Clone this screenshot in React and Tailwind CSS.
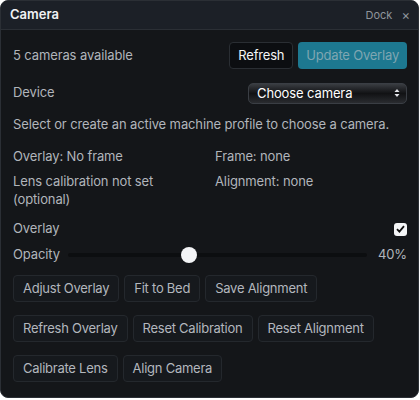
import { useState } from 'react'

const font = { fontFamily: 'Inter, "Noto Sans", sans-serif' }

function Btn({ children }) {
  return (
    <button className="h-[27px] px-[9px] rounded-[4px] border border-[#24282d] bg-[#16191d] text-[13px] text-[#b3b7bd] leading-none tracking-[-0.25px]">
      {children}
    </button>
  )
}

export default function App() {
  const [overlay, setOverlay] = useState(true)

  return (
    <div className="w-[420px] h-[400px] bg-white" style={font}>
      <div className="w-[419px] h-[398px] rounded-[8px] border border-[#2b2f35] bg-[#141619] overflow-hidden flex flex-col">

        {/* header */}
        <div className="h-[29px] shrink-0 bg-[#1c2027] border-b border-[#2b2f35] flex items-center justify-between pl-[9px] pr-[8px]">
          <span className="text-[13px] font-semibold text-[#f1f2f4]">Camera</span>
          <div className="flex items-center gap-[9px] text-[#8f949b]">
            <span className="text-[11px]">Dock</span>
            <span className="text-[13px] leading-none">×</span>
          </div>
        </div>

        <div className="flex flex-col pl-[12px] pr-[11px] text-[13px] text-[#b1b5bb] tracking-[-0.12px]">

          {/* cameras */}
          <div className="flex items-center justify-between mt-[12px] h-[27px]">
            <span>5 cameras available</span>
            <div className="flex gap-[5px]">
              <button className="h-[27px] px-[8px] rounded-[4px] border border-[#2a2e33] bg-[#0c0e11] text-[#f4f5f6] tracking-[-0.2px]">Refresh</button>
              <button className="h-[27px] px-[8px] rounded-[4px] bg-[#1d7890] text-[#7fa6b2] tracking-[-0.2px]">Update Overlay</button>
            </div>
          </div>

          {/* device */}
          <div className="flex items-center justify-between mt-[13px] h-[22px]">
            <span>Device</span>
            <div className="w-[159px] h-[21px] rounded-[5px] border border-[#3a3e44] bg-gradient-to-b from-[#3a3d42] via-[#111214] to-[#2a2c30] flex items-center justify-between pl-[8px] pr-[6px]">
              <span className="text-[13px] text-white leading-none">Choose camera</span>
              <svg width="6" height="10" viewBox="0 0 6 10">
                <path d="M3 1 L5.5 4 H0.5 Z" fill="#e5e7eb" />
                <path d="M3 9 L5.5 6 H0.5 Z" fill="#e5e7eb" />
              </svg>
            </div>
          </div>

          <p className="mt-[12px] leading-[17px]">Select or create an active machine profile to choose a camera.</p>

          {/* status grid */}
          <div className="grid grid-cols-[202px_1fr] mt-[14px] gap-y-[7px] leading-[18px]">
            <span>Overlay: No frame</span>
            <span>Frame: none</span>
            <span>Lens calibration not set<br />(optional)</span>
            <span>Alignment: none</span>
          </div>

          {/* overlay toggle */}
          <div className="flex items-center justify-between mt-[11px] h-[20px]">
            <span>Overlay</span>
            <button
              onClick={() => setOverlay(!overlay)}
              className="w-[13px] h-[13px] rounded-[3px] bg-[#f4f5f7] flex items-center justify-center"
            >
              {overlay && (
                <svg width="9" height="8" viewBox="0 0 9 8">
                  <path d="M1 4.2 L3.4 6.6 L8 1.2" stroke="#111" strokeWidth="1.8" fill="none" />
                </svg>
              )}
            </button>
          </div>

          {/* opacity */}
          <div className="flex items-center mt-[6px] h-[20px]">
            <span className="w-[55px]">Opacity</span>
            <div className="relative w-[299px] h-[4px] rounded-full bg-[#0c0e10]">
              <div className="absolute top-1/2 left-[113px] w-[16px] h-[16px] -translate-y-1/2 rounded-full bg-[#f3f4f6]" />
            </div>
            <span className="ml-auto">40%</span>
          </div>

          {/* actions */}
          <div className="flex flex-col gap-[13px] mt-[10px]">
            <div className="flex gap-[5px]">
              <Btn>Adjust Overlay</Btn>
              <Btn>Fit to Bed</Btn>
              <Btn>Save Alignment</Btn>
            </div>
            <div className="flex gap-[5px]">
              <Btn>Refresh Overlay</Btn>
              <Btn>Reset Calibration</Btn>
              <Btn>Reset Alignment</Btn>
            </div>
            <div className="flex gap-[5px]">
              <Btn>Calibrate Lens</Btn>
              <Btn>Align Camera</Btn>
            </div>
          </div>
        </div>
      </div>
    </div>
  )
}
